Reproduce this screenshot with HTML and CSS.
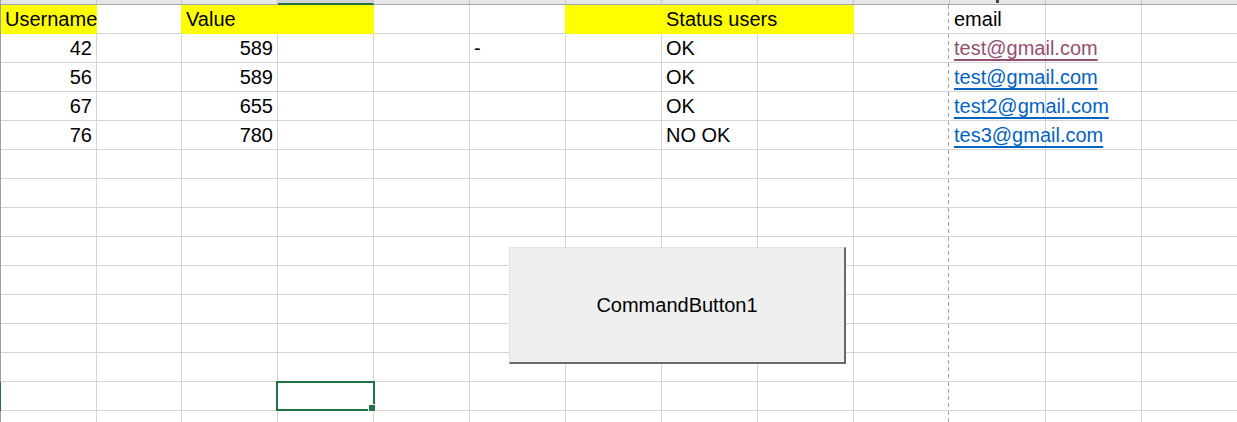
FILE: index.html
```html
<!DOCTYPE html>
<html>
<head>
<meta charset="utf-8">
<link rel="stylesheet" href="styles.css">
</head>
<body>
<div class="sheet">
  <div class="hdr">
    <div class="h ca"></div><div class="h cb"></div><div class="h"></div><div class="h hsel"></div><div class="h"></div><div class="h"></div><div class="h"></div><div class="h"></div><div class="h"></div><div class="h"></div><div class="h"><span class="tick"></span></div><div class="h"></div><div class="h"></div>
  </div>
  <div class="row">
    <div class="c ca y l"><span class="ov">Username</span></div><div class="c cb yb"></div><div class="c y l">Value</div><div class="c y"></div><div class="c"></div><div class="c yb"></div><div class="c y"></div><div class="c y l"><span class="ov">Status users</span></div><div class="c y"></div><div class="c pb"></div><div class="c l">email</div><div class="c"></div><div class="c"></div>
  </div>
  <div class="row">
    <div class="c ca r">42</div><div class="c cb"></div><div class="c r">589</div><div class="c"></div><div class="c"></div><div class="c l">-</div><div class="c"></div><div class="c l">OK</div><div class="c"></div><div class="c pb"></div><div class="c l"><a class="link visited ov" href="#">test@gmail.com</a></div><div class="c"></div><div class="c"></div>
  </div>
  <div class="row">
    <div class="c ca r">56</div><div class="c cb"></div><div class="c r">589</div><div class="c"></div><div class="c"></div><div class="c"></div><div class="c"></div><div class="c l">OK</div><div class="c"></div><div class="c pb"></div><div class="c l"><a class="link ov" href="#">test@gmail.com</a></div><div class="c"></div><div class="c"></div>
  </div>
  <div class="row">
    <div class="c ca r">67</div><div class="c cb"></div><div class="c r">655</div><div class="c"></div><div class="c"></div><div class="c"></div><div class="c"></div><div class="c l">OK</div><div class="c"></div><div class="c pb"></div><div class="c l"><a class="link ov" href="#">test2@gmail.com</a></div><div class="c"></div><div class="c"></div>
  </div>
  <div class="row">
    <div class="c ca r">76</div><div class="c cb"></div><div class="c r">780</div><div class="c"></div><div class="c"></div><div class="c"></div><div class="c"></div><div class="c l">NO OK</div><div class="c"></div><div class="c pb"></div><div class="c l"><a class="link ov" href="#">tes3@gmail.com</a></div><div class="c"></div><div class="c"></div>
  </div>
  <div class="row"><div class="c ca"></div><div class="c cb"></div><div class="c"></div><div class="c"></div><div class="c"></div><div class="c"></div><div class="c"></div><div class="c"></div><div class="c"></div><div class="c pb"></div><div class="c"></div><div class="c"></div><div class="c"></div></div>
  <div class="row"><div class="c ca"></div><div class="c cb"></div><div class="c"></div><div class="c"></div><div class="c"></div><div class="c"></div><div class="c"></div><div class="c"></div><div class="c"></div><div class="c pb"></div><div class="c"></div><div class="c"></div><div class="c"></div></div>
  <div class="row"><div class="c ca"></div><div class="c cb"></div><div class="c"></div><div class="c"></div><div class="c"></div><div class="c"></div><div class="c"></div><div class="c"></div><div class="c"></div><div class="c pb"></div><div class="c"></div><div class="c"></div><div class="c"></div></div>
  <div class="row"><div class="c ca"></div><div class="c cb"></div><div class="c"></div><div class="c"></div><div class="c"></div><div class="c"></div><div class="c"></div><div class="c"></div><div class="c"></div><div class="c pb"></div><div class="c"></div><div class="c"></div><div class="c"></div></div>
  <div class="row"><div class="c ca"></div><div class="c cb"></div><div class="c"></div><div class="c"></div><div class="c"></div><div class="c"></div><div class="c"></div><div class="c"></div><div class="c"></div><div class="c pb"></div><div class="c"></div><div class="c"></div><div class="c"></div></div>
  <div class="row"><div class="c ca"></div><div class="c cb"></div><div class="c"></div><div class="c"></div><div class="c"></div><div class="c"></div><div class="c"></div><div class="c"></div><div class="c"></div><div class="c pb"></div><div class="c"></div><div class="c"></div><div class="c"></div></div>
  <div class="row"><div class="c ca"></div><div class="c cb"></div><div class="c"></div><div class="c"></div><div class="c"></div><div class="c"></div><div class="c"></div><div class="c"></div><div class="c"></div><div class="c pb"></div><div class="c"></div><div class="c"></div><div class="c"></div></div>
  <div class="row"><div class="c ca"></div><div class="c cb"></div><div class="c"></div><div class="c"></div><div class="c"></div><div class="c"></div><div class="c"></div><div class="c"></div><div class="c"></div><div class="c pb"></div><div class="c"></div><div class="c"></div><div class="c"></div></div>
  <div class="row sel"><div class="c ca"></div><div class="c cb"></div><div class="c"></div><div class="c active"></div><div class="c"></div><div class="c"></div><div class="c"></div><div class="c"></div><div class="c"></div><div class="c pb"></div><div class="c"></div><div class="c"></div><div class="c"></div></div>
  <div class="row"><div class="c ca"></div><div class="c cb"></div><div class="c"></div><div class="c"></div><div class="c"></div><div class="c"></div><div class="c"></div><div class="c"></div><div class="c"></div><div class="c pb"></div><div class="c"></div><div class="c"></div><div class="c"></div></div>

  <button class="cmd" type="button">CommandButton1</button>
</div>
</body>
</html>
```

FILE: styles.css
```css
html, body {
  margin: 0;
  padding: 0;
  background: #ffffff;
  overflow: hidden;
}
body {
  width: 1237px;
  height: 422px;
  font-family: "Liberation Sans", Arial, sans-serif;
  font-size: 20px;
  color: #000;
}
.sheet {
  position: relative;
  width: 1237px;
  height: 422px;
  overflow: hidden;
}
.hdr {
  display: flex;
  border-left: 1px solid #9e9e9e;
}
.h {
  box-sizing: border-box;
  flex: 0 0 96px;
  min-width: 0;
  height: 5px;
  background: #e6e6e6;
  border-right: 1px solid #c4c4c4;
  border-bottom: 1px solid #a6a6a6;
  display: flex;
  justify-content: center;
}
.h.ca { flex-basis: 96px; }
.h.cb { flex-basis: 85px; }
.h.hsel {
  background: #d2d2d2;
  border-bottom: 2px solid #217346;
}
.tick {
  width: 3px;
  height: 3px;
  background: #444;
}
.row {
  display: flex;
  border-left: 1px solid #9e9e9e;
}
.row.sel { border-left-color: #217346; }
.c {
  box-sizing: border-box;
  flex: 0 0 96px;
  min-width: 0;
  height: 29px;
  border-right: 1px solid #d4d4d4;
  border-bottom: 1px solid #d4d4d4;
  line-height: 28px;
  white-space: nowrap;
}
.c.ca { flex-basis: 96px; }
.c.cb { flex-basis: 85px; }
.c.l { padding-left: 4px; text-align: left; }
.c.r { padding-right: 4px; text-align: right; }
.c.y {
  background: #ffff00;
  border-right-color: #ffff00;
  border-bottom-color: #ffff00;
}
.c.yb { border-right-color: #ffff00; }
.c.pb {
  border-right-color: transparent;
  background-image: repeating-linear-gradient(to bottom, #a3a3a3 0 4px, transparent 4px 7px);
  background-size: 1px 100%;
  background-position: right top;
  background-repeat: no-repeat;
}
.ov {
  position: relative;
  z-index: 1;
}
.link {
  color: #0563c1;
  text-decoration: underline;
  text-underline-offset: 4px;
}
.link.visited { color: #954f72; }
.c.active { position: relative; }
.c.active::after {
  content: "";
  position: absolute;
  left: -2px;
  top: -1px;
  right: -2px;
  bottom: -1px;
  border: 2px solid #217346;
}
.c.active::before {
  content: "";
  position: absolute;
  right: -3px;
  bottom: -2px;
  width: 6px;
  height: 6px;
  background: #217346;
  border: 1px solid #ffffff;
  z-index: 2;
}
.cmd {
  position: absolute;
  left: 509px;
  top: 247px;
  width: 337px;
  height: 117px;
  box-sizing: border-box;
  margin: 0;
  padding: 0;
  background: #efefef;
  border-style: solid;
  border-width: 1px 2px 2px 1px;
  border-color: #e2e2e2 #696969 #696969 #e2e2e2;
  font-family: "Liberation Sans", Arial, sans-serif;
  font-size: 20px;
  color: #000;
  display: flex;
  align-items: center;
  justify-content: center;
  z-index: 3;
}
```
